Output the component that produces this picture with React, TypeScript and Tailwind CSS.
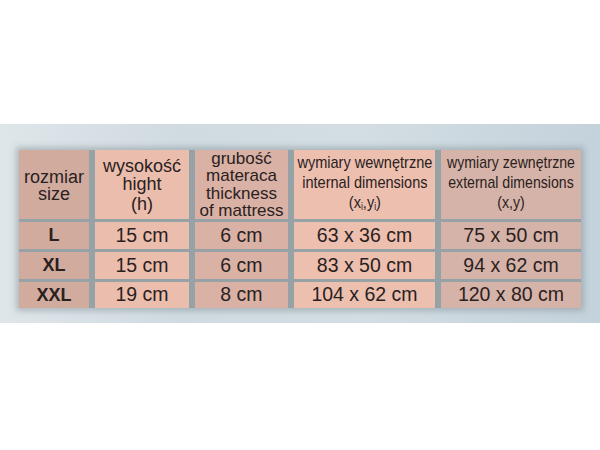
const cols = ["bg-[#d2ab9f]", "bg-[#eabdad]", "bg-[#d9b1a5]", "bg-[#ecbfaf]", "bg-[#d6b3a8]"];

const rows = [
  ["L", "15 cm", "6 cm", "63 x 36 cm", "75 x 50 cm"],
  ["XL", "15 cm", "6 cm", "83 x 50 cm", "94 x 62 cm"],
  ["XXL", "19 cm", "8 cm", "104 x 62 cm", "120 x 80 cm"],
];

export default function App() {
  return (
    <div className="w-[600px] h-[450px] bg-white font-['Liberation_Sans',Arial,sans-serif] text-[#2a211e]">
      <div className="h-[124px]" />
      {/* cloudy band */}
      <div className="h-[199px] pt-[26px] px-[19px] bg-[linear-gradient(90deg,#dfe6ea_0%,#d0dae1_30%,#d3dde3_60%,#c4d2db_100%)]">
        <div className="grid grid-cols-[70px_94px_93px_141px_140px] gap-x-[6px] gap-y-[3px] bg-[#97a2a6] shadow-[0_0_6px_3px_rgba(120,135,140,0.45)] w-max">
          {/* header */}
          <div className={`${cols[0]} h-[69px] flex flex-col items-center justify-center text-[18px] leading-[18px] pt-[2px]`}>
            <span>rozmiar</span>
            <span className="-mt-[1px]">size</span>
          </div>
          <div className={`${cols[1]} h-[69px] flex flex-col items-center justify-center text-[18px] leading-[18px]`}>
            <span>wysokość</span>
            <span>hight</span>
            <span className="mt-[2px]">(h)</span>
          </div>
          <div className={`${cols[2]} h-[69px] flex flex-col items-center justify-center text-[17px] leading-[17px]`}>
            <span>grubość</span>
            <span>materaca</span>
            <span className="mt-[1px]">thickness</span>
            <span>of mattress</span>
          </div>
          <div className={`${cols[3]} h-[69px] flex flex-col items-center justify-center pb-[4px]`}>
            <div className="flex flex-col items-center text-[17px] leading-[20px] whitespace-nowrap scale-x-[0.855]">
              <span>wymiary wewnętrzne</span>
              <span>internal dimensions</span>
              <span>
                (x<sub className="text-[10px]">i</sub>,y<sub className="text-[10px]">i</sub>)
              </span>
            </div>
          </div>
          <div className={`${cols[4]} h-[69px] flex flex-col items-center justify-center pb-[4px]`}>
            <div className="flex flex-col items-center text-[17px] leading-[20px] whitespace-nowrap scale-x-[0.83]">
              <span>wymiary zewnętrzne</span>
              <span>external dimensions</span>
              <span>(x,y)</span>
            </div>
          </div>
          {rows.map((r, ri) =>
            r.map((v, ci) => (
              <div
                key={`${ri}-${ci}`}
                className={`${cols[ci]} ${ri === 2 ? "h-[26px]" : "h-[27px]"} flex items-center justify-center ${
                  ci === 0 ? "text-[18px] font-bold" : "text-[19.5px]"
                }`}
              >
                {v}
              </div>
            ))
          )}
        </div>
      </div>
    </div>
  );
}
